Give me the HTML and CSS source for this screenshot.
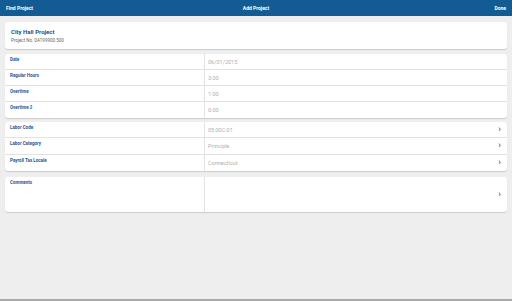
FILE: index.html
```html
<!DOCTYPE html>
<html lang="en">
<head>
    <meta charset="UTF-8">
    <meta name="viewport" content="width=device-width, initial-scale=1.0">
    <title>Add Project</title>
    <link rel="stylesheet" href="styles.css">
</head>
<body>

    <header class="topbar">
        <span class="topbar-left">Find Project</span>
        <span class="topbar-title">Add Project</span>
        <span class="topbar-right">Done</span>
    </header>

    <div class="page">
        <!-- Project -->
        <div class="card project-card">
            <div class="project-name">City Hall Project</div>
            <div class="project-no">Project No. 0A199900.500</div>
        </div>

        <!-- Hours -->
        <div class="card fields-card">
            <div class="row">
                <div class="label">Date</div>
                <div class="value">06/01/2015</div>
            </div>
            <div class="row">
                <div class="label">Regular Hours</div>
                <div class="value">3:00</div>
            </div>
            <div class="row">
                <div class="label">Overtime</div>
                <div class="value">1:00</div>
            </div>
            <div class="row">
                <div class="label">Overtime 2</div>
                <div class="value">0:00</div>
            </div>
        </div>

        <!-- Codes -->
        <div class="card codes-card">
            <div class="row">
                <div class="label">Labor Code</div>
                <div class="value">05:00C:01<span class="chevron">&rsaquo;</span></div>
            </div>
            <div class="row">
                <div class="label">Labor Category</div>
                <div class="value">Principle<span class="chevron">&rsaquo;</span></div>
            </div>
            <div class="row">
                <div class="label">Payroll Tax Locale</div>
                <div class="value">Connecticut<span class="chevron">&rsaquo;</span></div>
            </div>
        </div>

        <!-- Comments -->
        <div class="card comments-card">
            <div class="row">
                <div class="label">Comments</div>
                <div class="value"><span class="chevron">&rsaquo;</span></div>
            </div>
        </div>
    </div>

    <div class="bottom-line"></div>

</body>
</html>
```

FILE: styles.css
```css
body {
    margin: 0;
    padding: 0;
    height: 301px;
    background-color: #eeeeee;
    font-family: Roboto, "Liberation Sans", Arial, sans-serif;
    display: flex;
    flex-direction: column;
    overflow: hidden;
}

.topbar {
    height: 16px;
    background-color: #125c93;
    color: white;
    font-size: 5px;
    font-weight: bold;
    display: flex;
    align-items: center;
    justify-content: space-between;
    padding: 0 6px;
    flex-shrink: 0;
}

.topbar-left,
.topbar-right {
    width: 60px;
}

.topbar-right {
    text-align: right;
}

.page {
    flex-grow: 1;
    padding: 6px 5px 0 5px;
}

.card {
    background-color: white;
    border-radius: 3px;
    box-shadow: 0 1px 1px rgba(0, 0, 0, 0.15);
}

.project-card {
    height: 27px;
    padding: 0 6px;
    display: flex;
    flex-direction: column;
    justify-content: center;
    margin-bottom: 5px;
    box-sizing: border-box;
}

.project-name {
    color: #244f8e;
    font-size: 6px;
    font-weight: bold;
    margin-bottom: 3px;
}

.project-no {
    color: #666666;
    font-size: 4.5px;
}

.row {
    display: grid;
    grid-template-columns: 200px 1fr;
    height: 16px;
    border-bottom: 1px solid #e2e2e2;
    box-sizing: border-box;
}

.row:last-child {
    border-bottom: none;
}

.label {
    color: #2b5592;
    font-size: 4.5px;
    font-weight: bold;
    padding: 3px 0 0 5px;
    border-right: 1px solid #e2e2e2;
}

.value {
    color: #b0b0b0;
    font-size: 5.5px;
    display: flex;
    align-items: center;
    padding: 0 6px 0 3px;
}

.chevron {
    margin-left: auto;
    color: #666666;
    font-size: 9px;
    font-weight: bold;
    line-height: 1;
}

.fields-card {
    margin-bottom: 4px;
}

.codes-card {
    margin-bottom: 6px;
}

.codes-card .row {
    height: 16.3px;
}

.comments-card .row {
    height: 35px;
}

.bottom-line {
    height: 2px;
    background-color: #a9a9a9;
    flex-shrink: 0;
}
```
